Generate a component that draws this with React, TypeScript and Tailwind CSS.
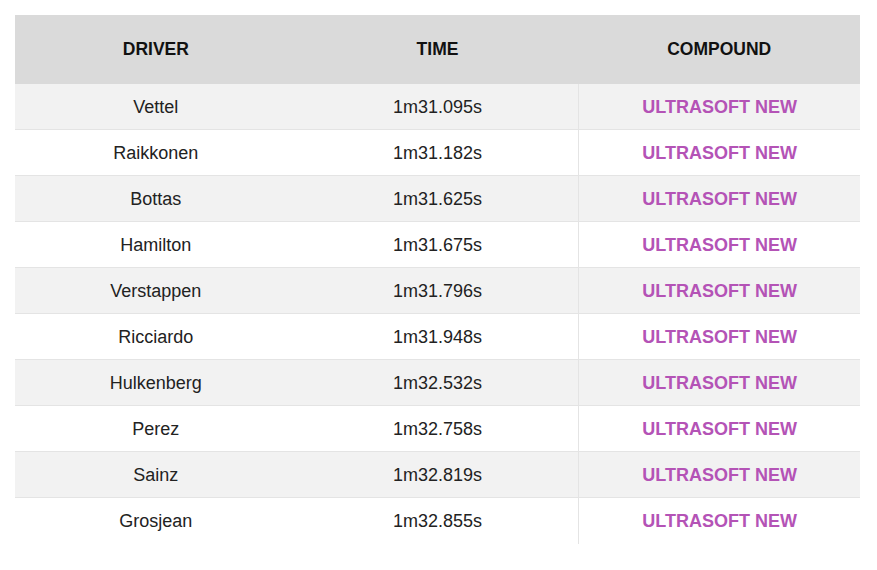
const rows = [
  { driver: "Vettel", time: "1m31.095s" },
  { driver: "Raikkonen", time: "1m31.182s" },
  { driver: "Bottas", time: "1m31.625s" },
  { driver: "Hamilton", time: "1m31.675s" },
  { driver: "Verstappen", time: "1m31.796s" },
  { driver: "Ricciardo", time: "1m31.948s" },
  { driver: "Hulkenberg", time: "1m32.532s" },
  { driver: "Perez", time: "1m32.758s" },
  { driver: "Sainz", time: "1m32.819s" },
  { driver: "Grosjean", time: "1m32.855s" },
];

export default function App() {
  return (
    <div className="w-[877px] h-[570px] bg-white pt-[15px] pl-[15px]" style={{ fontFamily: '"Liberation Sans", Arial, sans-serif' }}>
      <div className="w-[845px]">
        {/* Header */}
        <div className="grid grid-cols-3 h-[69px] bg-[#dadada] items-center text-[17.5px] font-bold text-[#111]">
          <div className="text-center">DRIVER</div>
          <div className="text-center">TIME</div>
          <div className="text-center">COMPOUND</div>
        </div>

        {rows.map((r, i) => (
          <div
            key={r.driver}
            className={`grid grid-cols-3 h-[46px] text-[18px] text-[#222] ${i % 2 === 0 ? "bg-[#f2f2f2]" : "bg-white"} ${i < rows.length - 1 ? "border-b border-[#e4e4e4]" : ""}`}
          >
            <div className="flex items-center justify-center pt-[1px]">{r.driver}</div>
            <div className="flex items-center justify-center pt-[1px]">{r.time}</div>
            <div className="flex items-center justify-center pt-[1px] border-l border-[#e4e4e4] font-bold text-[#b453b6]">
              ULTRASOFT NEW
            </div>
          </div>
        ))}
      </div>
    </div>
  );
}
